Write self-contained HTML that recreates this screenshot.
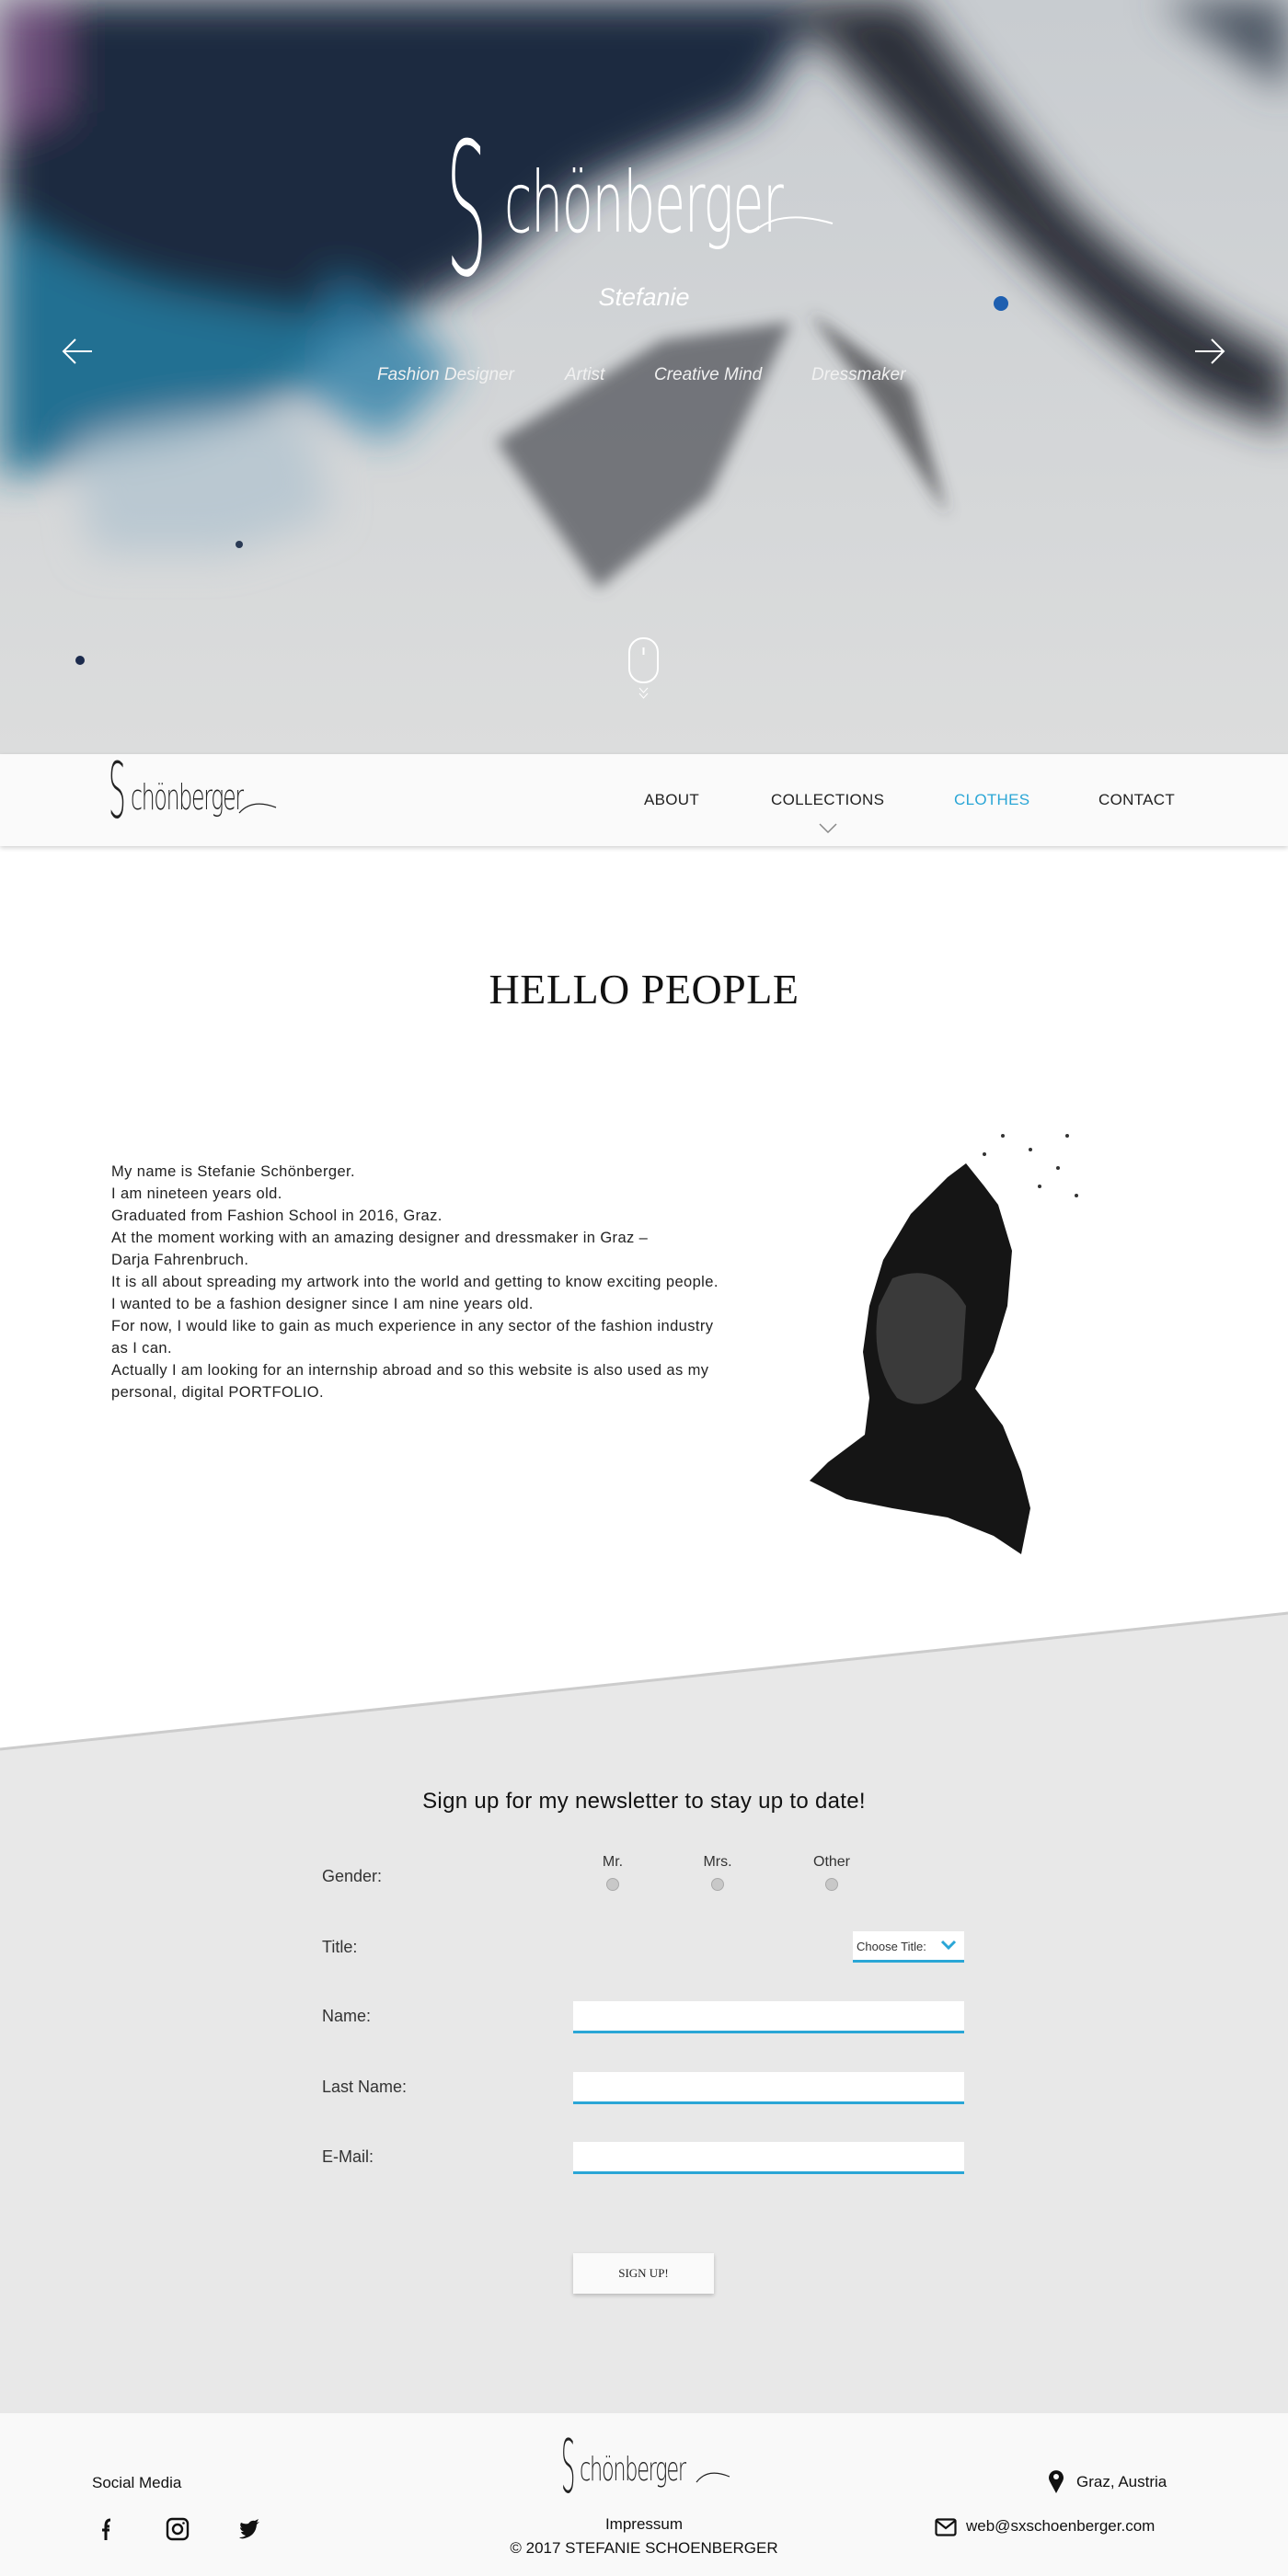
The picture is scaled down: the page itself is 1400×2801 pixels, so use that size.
<!DOCTYPE html>
<html><head><meta charset="utf-8">
<style>
*{margin:0;padding:0;box-sizing:border-box}
body{width:1400px;height:2801px;position:relative;font-family:"Liberation Sans",sans-serif;color:#222;background:#fff;overflow:hidden}
.abs{position:absolute}
#hero{left:0;top:0;width:1400px;height:820px;overflow:hidden;background:#d2d5d8}
.logo{font-family:"DejaVu Sans","Liberation Sans",sans-serif;font-weight:200;letter-spacing:-2px;white-space:nowrap}
.nav a{position:absolute;top:860px;font-size:17px;color:#222;text-decoration:none;letter-spacing:0.3px}
.lbl{position:absolute;left:350px;font-size:18px;color:#333}
.inp{position:absolute;left:623px;width:425px;height:35px;background:#fff;border-bottom:3px solid #2aa6d6}
.rad{position:absolute;width:14px;height:14px;border-radius:50%;background:#c8c8c8;border:1px solid #aaa;top:2042px}
.rl{position:absolute;top:2016px;font-size:16px;color:#333;transform:translateX(-50%)}
</style></head><body>

<div id="hero" class="abs">
<svg width="1400" height="820" style="position:absolute;left:0;top:0">
<defs>
<filter id="b" x="-20%" y="-20%" width="140%" height="140%"><feGaussianBlur stdDeviation="22"/></filter>
<filter id="b2"><feGaussianBlur stdDeviation="8"/></filter>
<linearGradient id="g0" x1="0" y1="0" x2="0" y2="1"><stop offset="0" stop-color="#c8ccd0"/><stop offset="1" stop-color="#dcdddd"/></linearGradient>
</defs>
<rect width="1400" height="820" fill="url(#g0)"/>
<g filter="url(#b)">
<path d="M0 0 H900 L820 120 L640 200 L520 300 L400 360 L250 400 L100 420 L0 440 Z" fill="#1e2b40"/>
<path d="M0 230 Q100 300 200 320 Q300 340 380 350 L330 420 L200 480 L80 500 L0 520 Z" fill="#236f92"/>
<path d="M360 300 Q430 330 500 400 L420 480 L330 430 Z" fill="#2a7ea8" opacity=".8"/>
<path d="M80 480 Q200 440 330 450 L360 560 L250 600 L100 600 Z" fill="#b3c4cf" opacity=".8"/>
<path d="M0 0 H70 V120 L0 150 Z" fill="#6a4b78"/>
<path d="M850 0 Q930 80 1040 200 Q1160 330 1300 430 L1400 470 V390 Q1270 330 1160 220 Q1070 110 990 0 Z" fill="#2b2f38"/>
<path d="M1260 0 H1400 V100 Q1330 50 1260 0 Z" fill="#4a5260"/>
</g>
<g filter="url(#b2)">
<path d="M540 480 L720 370 L860 350 L770 540 L650 640 Z" fill="#5a5c62" opacity=".8"/>
<path d="M880 340 L990 420 L1030 560 L960 450 Z" fill="#3a3b40" opacity=".7"/>
</g>
<circle cx="1088" cy="330" r="8" fill="#1e5fb0"/>
<circle cx="87" cy="718" r="5" fill="#1c2b4d"/>
<circle cx="260" cy="592" r="4" fill="#2a3a55"/>
</svg>
<div class="abs logo" style="left:485px;top:130px;font-size:200px;color:#fff;transform:scaleX(.35);transform-origin:left top;line-height:1">S</div>
<div class="abs logo" style="left:548px;top:175px;font-size:92px;color:#fff;transform:scaleX(.6);transform-origin:left top;line-height:1">chönberger</div>
<svg class="abs" style="left:820px;top:225px" width="90" height="30"><path d="M2 25 Q30 2 85 18" stroke="#fff" stroke-width="2" fill="none"/></svg>
<div class="abs" style="left:0;width:1400px;top:308px;text-align:center;color:#fff;font-size:27px;font-style:italic;font-weight:300">Stefanie</div>
<div class="abs" style="top:397px;left:0;width:1400px;color:#f1f1f1;font-size:19px;font-style:italic">
<span class="abs" style="left:410px">Fashion Designer</span>
<span class="abs" style="left:614px">Artist</span>
<span class="abs" style="left:711px">Creative Mind</span>
<span class="abs" style="left:882px">Dressmaker</span>
</div>
<svg class="abs" style="left:66px;top:366px" width="36" height="32"><path d="M34 16 H3 M16 3 L3 16 L16 29" stroke="#fff" stroke-width="2" fill="none"/></svg>
<svg class="abs" style="left:1297px;top:366px" width="36" height="32"><path d="M2 16 H33 M20 3 L33 16 L20 29" stroke="#fff" stroke-width="2" fill="none"/></svg>
<svg class="abs" style="left:682px;top:692px" width="36" height="70"><rect x="2" y="2" width="31" height="48" rx="15" stroke="#fff" stroke-width="2" fill="none"/><line x1="17.5" y1="12" x2="17.5" y2="20" stroke="#fff" stroke-width="2"/><path d="M13 56 L17.5 61 L22 56 M13 62 L17.5 67 L22 62" stroke="#fff" stroke-width="1" fill="none"/></svg>
</div>

<div class="abs" style="left:0;top:820px;width:1400px;height:100px;background:#fafafa;box-shadow:0 2px 5px rgba(0,0,0,.18)"></div>
<div class="abs logo" style="left:118px;top:818px;font-size:84px;color:#222;transform:scaleX(.35);transform-origin:left top;line-height:1">S</div>
<div class="abs logo" style="left:142px;top:848px;font-size:38px;color:#222;transform:scaleX(.62);transform-origin:left top;line-height:1">chönberger</div>
<svg class="abs" style="left:258px;top:868px" width="46" height="20"><path d="M2 16 Q16 0 42 10" stroke="#222" stroke-width="1.3" fill="none"/></svg>
<div class="nav">
<a style="left:700px">ABOUT</a>
<a style="left:838px">COLLECTIONS</a>
<a style="left:1037px;color:#2aa6d6">CLOTHES</a>
<a style="left:1194px">CONTACT</a>
</div>
<svg class="abs" style="left:890px;top:894px" width="20" height="14"><path d="M1 2 L10 11 L19 2" stroke="#888" stroke-width="1.5" fill="none"/></svg>

<div class="abs" style="left:0;width:1400px;top:1049px;text-align:center;font-family:'Liberation Serif',serif;font-size:46px;color:#111;letter-spacing:.5px">HELLO PEOPLE</div>

<div class="abs" style="left:121px;top:1262px;font-size:16.5px;letter-spacing:.4px;line-height:24px;color:#222">
My name is Stefanie Schönberger.<br>I am nineteen years old.<br>Graduated from Fashion School in 2016, Graz.<br>At the moment working with an amazing designer and dressmaker in Graz –<br>Darja Fahrenbruch.<br>It is all about spreading my artwork into the world and getting to know exciting people.<br>I wanted to be a fashion designer since I am nine years old.<br>For now, I would like to gain as much experience in any sector of the fashion industry<br>as I can.<br>Actually I am looking for an internship abroad and so this website is also used as my<br>personal, digital PORTFOLIO.
</div>

<svg class="abs" style="left:820px;top:1220px" width="420" height="480">
<path d="M210 60 L230 45 L250 70 L265 90 L280 140 L275 200 L260 250 L240 290 L270 330 L290 380 L300 420 L290 470 L260 450 L210 430 L150 420 L100 410 L60 390 L80 370 L120 340 L125 300 L118 250 L125 200 L140 150 L170 100 Z" fill="#151515"/>
<path d="M150 170 Q200 150 230 200 L225 280 Q190 320 155 300 Q125 260 135 200 Z" fill="#3a3a3a"/>
<g fill="#333"><circle cx="270" cy="15" r="2"/><circle cx="300" cy="30" r="2"/><circle cx="330" cy="50" r="2"/><circle cx="350" cy="80" r="2"/><circle cx="310" cy="70" r="2"/><circle cx="250" cy="35" r="2"/><circle cx="340" cy="15" r="2"/></g>
</svg>

<svg class="abs" style="left:0;top:1740px" width="1400" height="890"><path d="M0 162 L1400 14 V890 H0 Z" fill="#e8e8e8"/><path d="M0 162 L1400 14" stroke="#ccc" stroke-width="3"/></svg>

<div class="abs" style="left:0;width:1400px;top:1945px;text-align:center;font-size:24px;letter-spacing:.3px;color:#111">Sign up for my newsletter to stay up to date!</div>
<div class="lbl" style="top:2030px">Gender:</div>
<div class="rl" style="left:666px">Mr.</div><div class="rl" style="left:780px">Mrs.</div><div class="rl" style="left:904px">Other</div>
<div class="rad" style="left:659px"></div><div class="rad" style="left:773px"></div><div class="rad" style="left:897px"></div>
<div class="lbl" style="top:2107px">Title:</div>
<div class="abs" style="left:927px;top:2100px;width:121px;height:34px;background:#fff;border-bottom:3px solid #2aa6d6;font-size:13px;padding:9px 0 0 4px;color:#333">Choose Title:
<svg class="abs" style="left:95px;top:9px" width="18" height="12"><path d="M2 2 L9 9 L16 2" stroke="#2aa6d6" stroke-width="3" fill="none"/></svg></div>
<div class="lbl" style="top:2182px">Name:</div><div class="inp" style="top:2176px"></div>
<div class="lbl" style="top:2259px">Last Name:</div><div class="inp" style="top:2253px"></div>
<div class="lbl" style="top:2335px">E-Mail:</div><div class="inp" style="top:2329px"></div>
<div class="abs" style="left:623px;top:2450px;width:153px;height:44px;background:#fafafa;box-shadow:0 2px 4px rgba(0,0,0,.2);text-align:center;line-height:44px;font-family:'Liberation Serif',serif;font-size:13px;color:#222">SIGN UP!</div>

<div class="abs" style="left:0;top:2624px;width:1400px;height:177px;background:#f9f9f9"></div>
<div class="abs" style="left:100px;top:2690px;font-size:17px;color:#111">Social Media</div>
<svg class="abs" style="left:100px;top:2735px" width="200" height="30">
<path d="M15 27 V12 H19 M11 16 H19 M15 12 Q15 5 20 5" stroke="#111" stroke-width="3" fill="none"/>
<rect x="82" y="4" width="22" height="22" rx="5" stroke="#111" stroke-width="2.4" fill="none"/><circle cx="93" cy="15" r="5" stroke="#111" stroke-width="2.4" fill="none"/><circle cx="99.5" cy="8.5" r="1.3" fill="#111"/>
<path d="M162 8 Q166 10 170 9 Q173 5 177 6 L181 4 L179 8 L182 7 L179 10 Q178 22 166 25 Q162 26 160 24 Q165 24 167 22 Q163 21 162 18 L165 18 Q161 16 161 13 L163 14 Q160 11 162 8 Z" fill="#111"/>
</svg>
<div class="abs logo" style="left:610px;top:2643px;font-size:80px;color:#222;transform:scaleX(.3);transform-origin:left top;line-height:1">S</div>
<div class="abs logo" style="left:630px;top:2668px;font-size:36px;color:#222;transform:scaleX(.62);transform-origin:left top;line-height:1">chönberger</div>
<svg class="abs" style="left:755px;top:2683px" width="40" height="20"><path d="M2 16 Q14 0 38 10" stroke="#222" stroke-width="1.2" fill="none"/></svg>
<div class="abs" style="left:0;width:1400px;top:2735px;text-align:center;font-size:17px;color:#111">Impressum</div>
<div class="abs" style="left:0;width:1400px;top:2761px;text-align:center;font-size:17px;color:#111">© 2017 STEFANIE SCHOENBERGER</div>
<svg class="abs" style="left:1138px;top:2684px" width="20" height="28"><path d="M10 27 L3 14 A8 8 0 1 1 17 14 Z" fill="#111"/><circle cx="10" cy="9" r="3" fill="#f9f9f9"/></svg>
<div class="abs" style="left:1170px;top:2689px;font-size:17px;color:#111">Graz, Austria</div>
<svg class="abs" style="left:1016px;top:2737px" width="24" height="22"><rect x="1.5" y="2.5" width="21" height="17" rx="2" stroke="#111" stroke-width="2.2" fill="none"/><path d="M2 4 L12 12 L22 4" stroke="#111" stroke-width="2.2" fill="none"/></svg>
<div class="abs" style="left:1050px;top:2737px;font-size:17px;color:#111">web@sxschoenberger.com</div>
</body></html>
